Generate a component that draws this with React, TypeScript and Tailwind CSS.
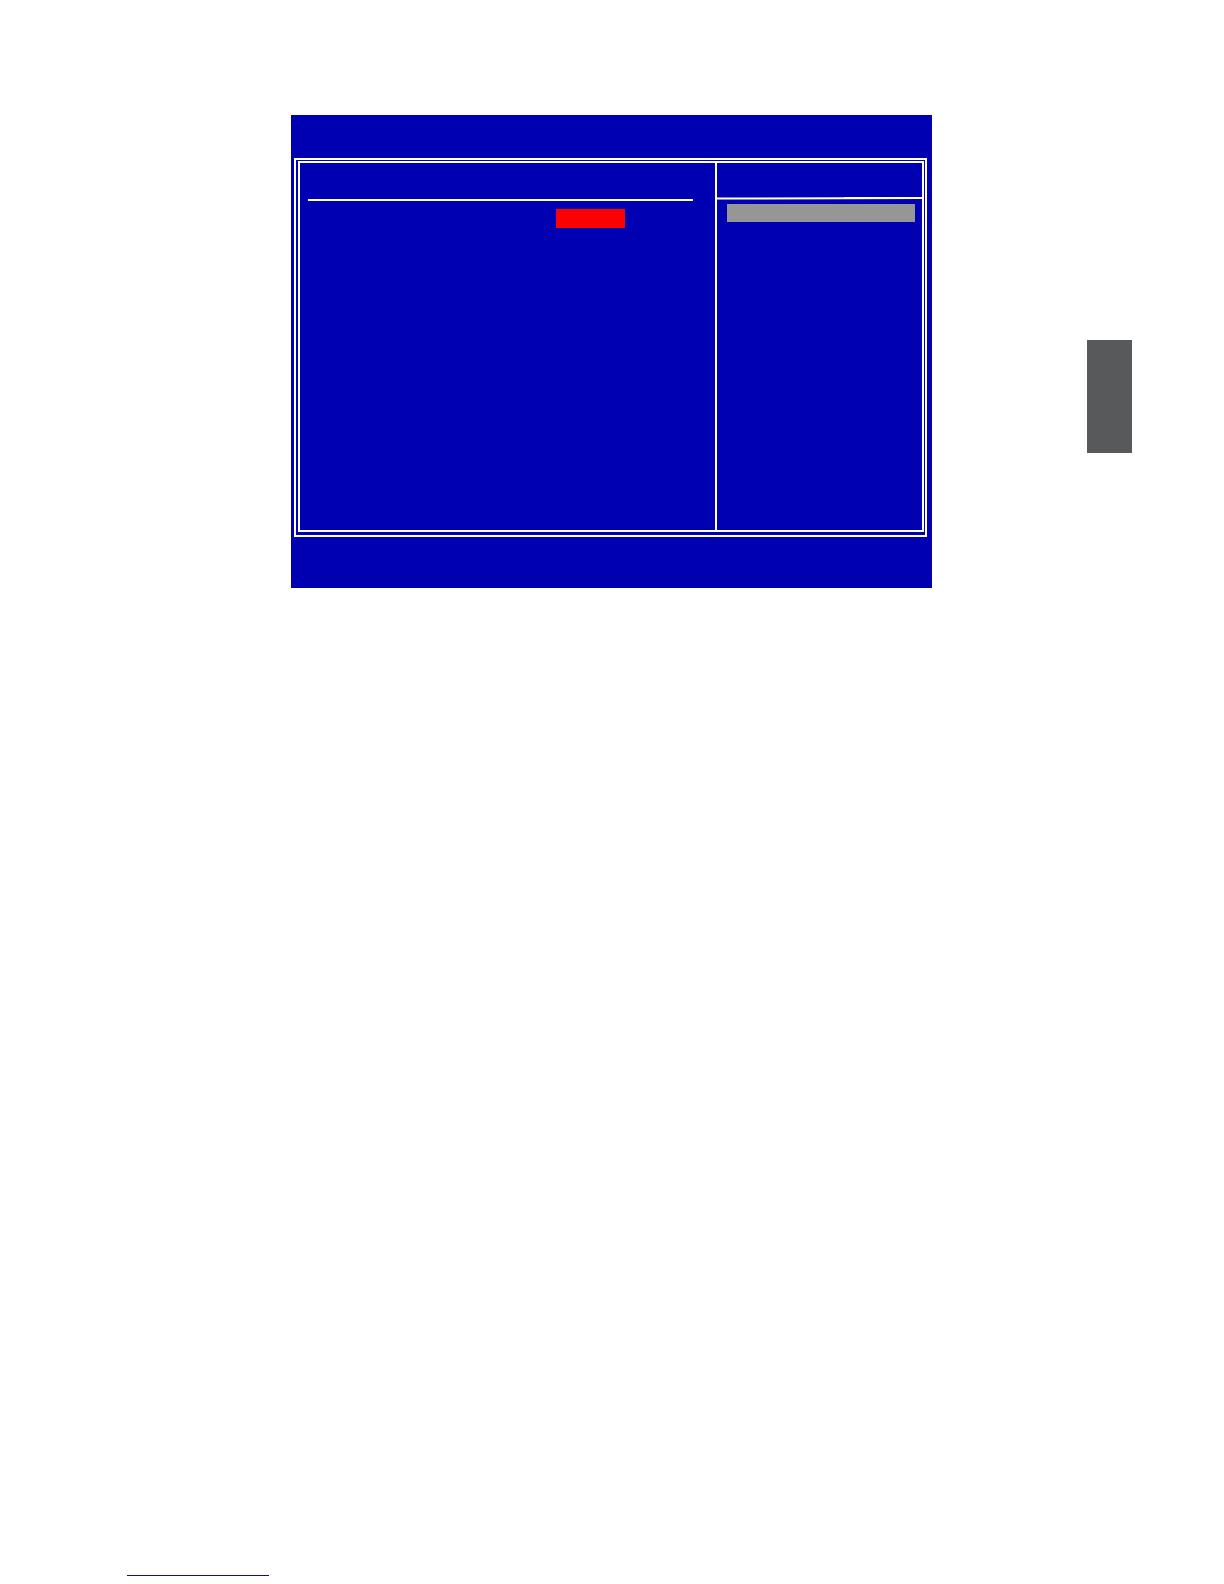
import React from 'react';

const SetupScreen: React.FC = () => {
  return (
    <section className="ml-[291px] w-[641px] shrink-0 bg-[#0000b3] pt-[43px] pr-[5px] pb-[51px] pl-[3px]">
      <div className="border-2 border-white pt-px pr-px pb-[3px] pl-[2px]">
        <div className="flex h-[371px] border-2 border-white">
          {/* settings list */}
          <div className="flex-1 pt-9 pl-2">
            <div className="mr-[22px] h-0.5 bg-white" />
            <div className="mt-2 ml-[248px] h-[19px] w-[69px] bg-[#ff0000]" />
          </div>

          {/* item help */}
          <div className="w-[207px] border-l-2 border-white pt-[34px]">
            {/* this rule is not quite level */}
            <svg className="block h-[3px] w-full" viewBox="0 0 205 3" preserveAspectRatio="none">
              <path d="M0 0.4L45 0.4L127 0.2L127 0L205 0L205 2L127 2.2L45 2.4L0 2.4Z" fill="#ffffff" />
            </svg>
            <div className="mt-1 mr-[7px] ml-2.5 h-[18px] bg-[#969696]" />
          </div>
        </div>
      </div>
    </section>
  );
};

const App: React.FC = () => {
  return (
    <main className="flex min-h-screen flex-col bg-white pt-[115px] pb-2">
      <div className="flex items-start justify-between">
        <SetupScreen />
        <aside className="mt-[225px] mr-[92px] h-[113px] w-[45px] bg-[#58595b]" />
      </div>

      {/* footer rule */}
      <div className="mt-auto ml-[127px] h-px w-[142px] bg-[#10108c]" />
    </main>
  );
};

export default App;
